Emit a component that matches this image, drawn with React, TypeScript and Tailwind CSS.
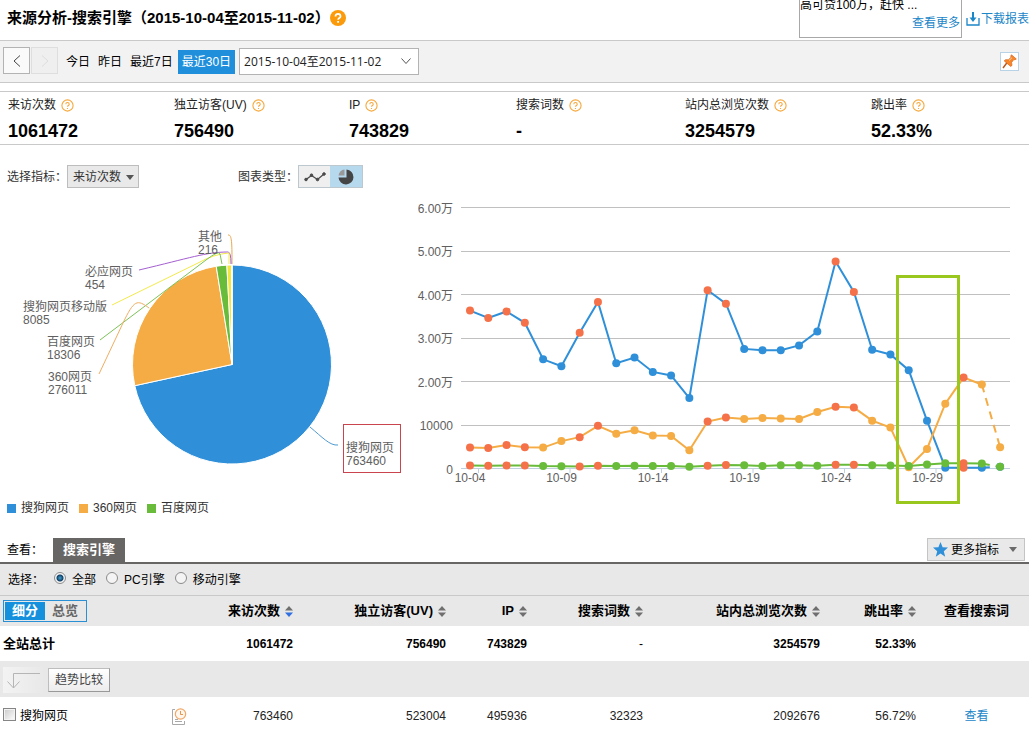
import React from "react";

const stats = [
  { label: "来访次数", value: "1061472" },
  { label: "独立访客(UV)", value: "756490" },
  { label: "IP", value: "743829" },
  { label: "搜索词数", value: "-" },
  { label: "站内总浏览次数", value: "3254579" },
  { label: "跳出率", value: "52.33%" },
];

const columns = ["来访次数", "独立访客(UV)", "IP", "搜索词数", "站内总浏览次数", "跳出率"];

const BLUE = "#2f90d9";
const ORANGE = "#f5ac44";
const GREEN = "#68bc3a";
const RED = "#f57149";

const series = [
  {
    name: "搜狗网页",
    color: BLUE,
    values: [
      36300, 34600, 36100, 33500, 25100, 23500, 31200, 38300, 24200, 25500,
      22200, 21400, 16200, 41000, 37900, 27500, 27200, 27200, 28300, 31500,
      47600, 40600, 27300, 26200, 22600, 11000, 200, 200, 200, 400,
    ],
  },
  {
    name: "360网页",
    color: ORANGE,
    values: [
      4800, 4700, 5400, 4900, 4800, 6300, 7200, 9800, 8000, 8800, 7600, 7500,
      4200, 10800, 11700, 11400, 11600, 11500, 11400, 13000, 14200, 14000,
      11000, 9400, 300, 4500, 14900, 20900, 19300, 4900,
    ],
  },
  {
    name: "百度网页",
    color: GREEN,
    values: [
      700, 650, 700, 700, 550, 500, 450, 650, 600, 650, 600, 550, 400, 650, 800,
      750, 550, 750, 750, 650, 850, 850, 750, 700, 600, 900, 1200, 1200, 1150,
      400,
    ],
  },
];

// days drawn with a red marker
const holidays = [0, 1, 2, 3, 6, 7, 13, 14, 20, 21, 27];

const yLabels = ["0", "10000", "2.00万", "3.00万", "4.00万", "5.00万", "6.00万"];
const xLabels = ["10-04", "10-09", "10-14", "10-19", "10-24", "10-29"];

const pieSlices = [
  { value: 763460, color: BLUE },
  { value: 276011, color: ORANGE },
  { value: 18306, color: GREEN },
  { value: 8085, color: "#f2e63d" },
  { value: 454, color: "#9b59c9" },
  { value: 216, color: "#d98a3a" },
];

const pieLabels = [
  { name: "其他", value: "216", x: 198, y: 53 },
  { name: "必应网页", value: "454", x: 85, y: 88 },
  { name: "搜狗网页移动版", value: "8085", x: 23, y: 123 },
  { name: "百度网页", value: "18306", x: 47, y: 158 },
  { name: "360网页", value: "276011", x: 48, y: 193 },
  { name: "搜狗网页", value: "763460", x: 346, y: 264 },
];

const pieLines = [
  { d: "M228 47 C232 46 232 56 232 76", color: "#e6a94e" },
  { d: "M139 82 C190 70 206 64 228 64 Q231 64 231 76", color: "#a55fd0" },
  { d: "M112 117 L198 75 Q214 66 229 65 L229 76", color: "#f3ea4c" },
  { d: "M100 152 L206 72 Q219 62 220 66 L222 76", color: "#7cc257" },
  { d: "M99 186 L123 135 C134 112 137 111 149 120", color: "#efae62" },
  { d: "M310 239 C322 249 330 258 338 257", color: "#4f9bd0" },
];

function HelpIcon() {
  return (
    <svg width="13" height="13" viewBox="0 0 13 13" fill="none">
      <circle cx="6.5" cy="6.5" r="5.6" stroke="#f6a83c" strokeWidth="1.1" />
      <path
        d="M4.8 5.2c0-2.2 3.4-2.2 3.4 0 0 1.3-1.7 1.2-1.7 2.5M6.5 9v1"
        stroke="#f6a83c"
        strokeWidth="1.1"
      />
    </svg>
  );
}

function SortIcon({ active }: { active?: boolean }) {
  return (
    <svg width="8" height="11" viewBox="0 0 8 11">
      <path d="M4 0L8 4.5H0z" fill="#6f6f6f" />
      <path d="M4 11L0 6.5H8z" fill={active ? "#2f6fe0" : "#6f6f6f"} />
    </svg>
  );
}

function PieChart() {
  const cx = 232;
  const cy = 176.5;
  const r = 99.5;
  const total = pieSlices.reduce((sum, s) => sum + s.value, 0);
  let start = 0;

  return (
    <svg viewBox="0 0 410 302" className="block w-full">
      {pieSlices.map((s) => {
        const end = start + (s.value / total) * Math.PI * 2;
        const large = end - start > Math.PI ? 1 : 0;
        const d = `M${cx} ${cy} L${cx + r * Math.sin(start)} ${cy - r * Math.cos(start)} A${r} ${r} 0 ${large} 1 ${cx + r * Math.sin(end)} ${cy - r * Math.cos(end)}Z`;
        start = end;
        return <path key={s.value} d={d} fill={s.color} stroke="#fff" />;
      })}
      {pieLines.map((l) => (
        <path key={l.d} d={l.d} fill="none" stroke={l.color} />
      ))}
      {pieLabels.map((l) => (
        <text key={l.value} fontSize="12" fill="#606060" x={l.x} y={l.y}>
          {l.name}
          <tspan x={l.x} dy="13">
            {l.value}
          </tspan>
        </text>
      ))}
      <rect x="343.5" y="236.5" width="57" height="48" fill="none" stroke="#c9444f" />
    </svg>
  );
}

function LineChart() {
  const px = (i: number) => 60 + i * 18.28;
  const py = (v: number) => 273.5 - (v / 10000) * 43.5;

  return (
    <svg viewBox="0 0 619 315" className="block w-full">
      {yLabels.map((label, i) => (
        <g key={label}>
          <line
            x1="51"
            x2="600"
            y1={Math.floor(py(i * 10000)) + 0.5}
            y2={Math.floor(py(i * 10000)) + 0.5}
            stroke={i === 0 ? "#c0d0e0" : "#c0c0c0"}
          />
          <text x="43" y={py(i * 10000) + 5} textAnchor="end" fontSize="12" fill="#606060">
            {label}
          </text>
        </g>
      ))}
      {xLabels.map((label, i) => (
        <g key={label}>
          <line x1={68.5 + i * 91.5} x2={68.5 + i * 91.5} y1="273" y2="278" stroke="#c0d0e0" />
          <text x={60 + i * 91.5} y="287" textAnchor="middle" fontSize="12" fill="#606060">
            {label}
          </text>
        </g>
      ))}
      {series.map((s) => {
        const points = s.values.map((v, i) => `${px(i)},${py(v)}`);
        return (
          <g key={s.name}>
            <polyline points={points.slice(0, 29).join(" ")} fill="none" stroke={s.color} strokeWidth="2" />
            {/* today is not complete yet */}
            <polyline
              points={points.slice(28).join(" ")}
              fill="none"
              stroke={s.color}
              strokeWidth="2"
              strokeDasharray="8 6"
            />
            {s.values.map((v, i) => (
              <circle key={i} cx={px(i)} cy={py(v)} r="4" fill={holidays.includes(i) ? RED : s.color} />
            ))}
          </g>
        );
      })}
      <rect x="487.5" y="81.5" width="61" height="226" fill="none" stroke="#99c71e" strokeWidth="3" />
    </svg>
  );
}

function Header() {
  return (
    <header className="flex h-10 items-start pl-[7px]">
      <h1 className="flex items-center pt-2 text-[15px] leading-5 font-bold whitespace-nowrap">
        来源分析-搜索引擎（2015-10-04至2015-11-02）
        <svg width="16" height="16" viewBox="0 0 16 16" fill="none">
          <circle cx="8" cy="8" r="8" fill="#fb9a0a" />
          <path d="M5.5 6.4c0-3.3 5-3.3 5 0 0 1.8-2.4 1.6-2.4 3.4M8.1 11v1.8" stroke="#fff" strokeWidth="1.8" />
        </svg>
      </h1>
      {/* Notice */}
      <div className="ml-auto flex h-[38px] w-[163px] shrink-0 flex-col justify-end gap-[2px] overflow-hidden border-x border-b border-[#a8a8a8] pb-[6px]">
        <p className="whitespace-nowrap">高可贷100万，赶快 ...</p>
        <a href="#more" className="self-end pr-px text-[#1b86c8]">
          查看更多
        </a>
      </div>
      <a href="#download" className="ml-1 flex shrink-0 items-center gap-px pt-[11px] text-[#1b86c8]">
        <svg width="14" height="14" viewBox="0 0 14 14" fill="none" stroke="#1b86c8">
          <path d="M1 6v7h12V6" strokeWidth="1.3" />
          <path d="M7 0v6" strokeWidth="2" />
          <path d="M3.5 5.5h7L7 10z" fill="#1b86c8" stroke="none" />
        </svg>
        下载报表
      </a>
    </header>
  );
}

function Toolbar() {
  return (
    <div className="flex h-[43px] items-center border-y border-[#c9c9c9] bg-[#f2f2f2] pr-[10px] pl-[3px]">
      <div className="flex gap-px pb-[2px]">
        <button aria-label="上一页" className="flex h-[27px] w-[27px] items-center justify-center border border-[#b3b3b3] bg-[#fafafa]">
          <svg width="8" height="12" viewBox="0 0 8 12" fill="none" stroke="#444">
            <path d="M7 0.5L1 6l6 5.5" />
          </svg>
        </button>
        <button aria-label="下一页" disabled className="flex h-[27px] w-[27px] items-center justify-center border border-[#dedede] bg-[#efefef]">
          <svg width="8" height="12" viewBox="0 0 8 12" fill="none" stroke="#ddd">
            <path d="M1 0.5L7 6l-6 5.5" />
          </svg>
        </button>
      </div>
      <div className="ml-2 flex items-center gap-2">
        <button>今日</button>
        <button>昨日</button>
        <button>最近7日</button>
        <button className="-ml-[3px] h-6 bg-[#1f8fdc] px-1 text-white">最近30日</button>
      </div>
      <div className="relative ml-1">
        <select
          aria-label="日期范围"
          className="block h-[27px] w-[180px] appearance-none border border-[#b3b3b3] bg-white pl-1 font-['Open_Sans','Noto_Sans_CJK_SC',sans-serif] text-[#222]"
        >
          <option>2015-10-04至2015-11-02</option>
        </select>
        <svg className="pointer-events-none absolute top-[10px] right-2" width="10" height="7" viewBox="0 0 10 7" fill="none" stroke="#555">
          <path d="M0.5 0.5L5 5.5l4.5-5" />
        </svg>
      </div>
      <button aria-label="固定" className="ml-auto flex h-[19px] w-[19px] items-center justify-center border border-[#b9d3e6] bg-white">
        <svg width="15" height="15" viewBox="0 0 15 15">
          <path d="M1 14l4.5-6" stroke="#b5561b" strokeWidth="1.4" />
          <path
            d="M9.5 0.8l4.8 4.2-1.4 0.8-1-0.3-2.3 2.9 0.4 3-1.3 1L2.2 6.9l1.2-1.2 3 0.1 2.7-2.6-0.4-1.2z"
            fill="#f8872c"
            stroke="#d8641a"
            strokeWidth="0.7"
          />
          <path d="M7 6.6l2.9-2.8" stroke="#ffd09b" />
        </svg>
      </button>
    </div>
  );
}

function Charts() {
  return (
    <section className="flex items-start pb-[22px]">
      <div className="w-[410px] shrink-0 pt-5 text-[#333]">
        <div className="flex pl-[7px]">
          <div className="flex w-[231px] items-center">
            <label htmlFor="metric">选择指标：</label>
            <div className="relative">
              <select
                id="metric"
                className="block h-[23px] w-[72px] appearance-none border border-[#bdbdbd] bg-[#e9e9e9] pl-[5px]"
              >
                <option>来访次数</option>
              </select>
              <svg className="pointer-events-none absolute top-[10px] right-[5px]" width="8" height="5" viewBox="0 0 8 5">
                <path d="M0 0h8L4 5z" fill="#555" />
              </svg>
            </div>
          </div>
          <span className="flex items-center">图表类型：</span>
          <div className="flex h-[23px] border border-[#bcc7ce]">
            <button aria-label="折线图" className="flex w-[31px] items-center justify-center bg-[#efefef]">
              <svg width="22" height="10" viewBox="0 0 22 10" fill="#4a4a4a" stroke="#4a4a4a">
                <path d="M2 7.5l5.5-4 6 4L20 2" fill="none" strokeWidth="1.3" />
                <circle cx="2" cy="7.5" r="1.3" />
                <circle cx="7.5" cy="3.2" r="1.3" />
                <circle cx="13.5" cy="7.5" r="1.3" />
                <circle cx="20" cy="2" r="1.3" />
              </svg>
            </button>
            <button aria-label="饼图" className="flex w-8 items-center justify-center bg-[#b6d9ee]">
              <svg width="16" height="16" viewBox="0 0 16 16">
                <path d="M8.5 0.5a7.5 7.5 0 1 1-8 8h8z" fill="#454545" />
                <path d="M6.5 0.5v6h-6a6.5 6.5 0 0 1 6-6z" fill="#999" />
              </svg>
            </button>
          </div>
        </div>
        <PieChart />
        <ul className="mt-[10px] flex gap-[10px] pl-[7px]">
          {series.map((s) => (
            <li key={s.name} className="flex items-center gap-[5px]">
              <span className="h-[9px] w-[9px]" style={{ backgroundColor: s.color }} />
              {s.name}
            </li>
          ))}
        </ul>
      </div>
      <div className="min-w-0 flex-1 pt-[50px]">
        <LineChart />
      </div>
    </section>
  );
}

function Filters() {
  return (
    <>
      <div className="flex h-[26px] items-start border-b-2 border-[#686565] pr-1 pl-[7px]">
        <span className="w-[46px] pt-1">查看：</span>
        <button className="h-6 bg-[#686565] px-[10px] text-[13px] font-bold text-white">搜索引擎</button>
        <button className="ml-auto flex h-[23px] items-center border border-[#c4c4c4] bg-[#e9e9e9] pr-[7px] pl-[5px]">
          <svg width="15" height="15" viewBox="0 0 15 15" className="mr-[3px]">
            <path d="M7.5 0l2.1 5.3 5.4 0.3-4.2 3.6 1.4 5.5-4.7-3.1-4.7 3.1 1.4-5.5L0 5.6l5.4-0.3z" fill="#2f90d9" />
          </svg>
          更多指标
          <svg width="8" height="5" viewBox="0 0 8 5" className="ml-[10px]">
            <path d="M0 0h8L4 5z" fill="#6a6a6a" />
          </svg>
        </button>
      </div>
      <fieldset className="flex h-8 items-center gap-[10px] border-b border-[#c9c9c9] bg-[#e8e8e8] pl-2">
        <span className="w-9">选择：</span>
        {["全部", "PC引擎", "移动引擎"].map((name, i) => (
          <label key={name} className="flex items-center gap-[6px]">
            <input
              type="radio"
              name="engine"
              defaultChecked={i === 0}
              className="mb-[3px] h-3 w-3 appearance-none rounded-full border border-[#8b8b8b] bg-[#f4f4f4] checked:bg-[radial-gradient(circle,#3fa3d2_0,#123f66_3px,#f4f4f4_4px)]"
            />
            {name}
          </label>
        ))}
      </fieldset>
    </>
  );
}

function DataTable() {
  return (
    <table className="w-full table-fixed text-right">
      <colgroup>
        <col className="w-[200px]" />
        <col className="w-[93px]" />
        <col className="w-[153px]" />
        <col className="w-[81px]" />
        <col className="w-[116px]" />
        <col className="w-[177px]" />
        <col className="w-[96px]" />
        <col className="w-[113px]" />
      </colgroup>
      <thead>
        <tr className="h-[30px] bg-[#e8e8e8] text-[13px]">
          <th className="p-0 pl-[3px]">
            <div className="flex h-[22px] w-[84px] border border-[#2a90d6] p-px">
              <button className="w-10 bg-[#1590dd] font-bold text-white">细分</button>
              <button className="w-10 font-bold text-[#666]">总览</button>
            </div>
          </th>
          {columns.map((name, i) => (
            <th key={name} className="p-0">
              <button className="inline-flex items-center gap-[5px] whitespace-nowrap">
                {name}
                <SortIcon active={i === 0} />
              </button>
            </th>
          ))}
          <th className="p-0 pl-2 text-center whitespace-nowrap">查看搜索词</th>
        </tr>
      </thead>
      <tbody>
        <tr className="h-[35px] font-bold">
          <td className="p-0 pl-[3px] text-left text-[13px]">全站总计</td>
          <td>1061472</td>
          <td>756490</td>
          <td>743829</td>
          <td className="font-normal">-</td>
          <td>3254579</td>
          <td>52.33%</td>
          <td />
        </tr>
        <tr className="h-9 bg-[#e8e8e8]">
          <td colSpan={8} className="p-0 pl-[3px]">
            <div className="flex items-center gap-[3px] pt-[2px]">
              <span className="flex h-[26px] w-[42px] items-center justify-center bg-gradient-to-r from-[#f3f3f3] to-[#e8e8e8]">
                <svg width="34" height="17" viewBox="0 0 34 17" fill="none" stroke="#b5b5b5">
                  <path d="M33 1.5H6.5V16M0.5 9.5l6 6.500 6-6.500" />
                </svg>
              </span>
              <button className="h-6 border border-[#bdbdbd] border-r-[#999] border-b-[#999] bg-gradient-to-b from-white to-[#ececec] px-[6px] text-[#444]">
                趋势比较
              </button>
            </div>
          </td>
        </tr>
        <tr className="h-8 text-[#222]">
          <td className="p-0 pt-[6px] pl-[3px]">
            <div className="flex items-center pr-[13px]">
              <label className="flex items-center gap-1 text-black">
                <input
                  type="checkbox"
                  className="mb-1 h-[13px] w-[13px] appearance-none border border-[#858585] bg-gradient-to-br from-[#c9c9c9] to-white shadow-[inset_0_0_0_1px_#f3f3f3] checked:bg-[#2f90d9]"
                />
                搜狗网页
              </label>
              <svg width="15" height="17" viewBox="0 0 15 17" fill="none" className="ml-auto">
                <path d="M3 1.5H0.5V16.5H12.5V13M3 11.5h3M3 13.5h7" stroke="#a8a8a8" />
                <circle cx="8.5" cy="6" r="5.2" fill="#fff7ee" stroke="#f0a868" strokeWidth="1.2" />
                <path d="M8.5 3v3.5H11" stroke="#e8954c" />
              </svg>
            </div>
          </td>
          <td className="p-0 pt-[6px]">763460</td>
          <td className="p-0 pt-[6px]">523004</td>
          <td className="p-0 pt-[6px]">495936</td>
          <td className="p-0 pt-[6px]">32323</td>
          <td className="p-0 pt-[6px]">2092676</td>
          <td className="p-0 pt-[6px]">56.72%</td>
          <td className="p-0 pt-[6px] pl-2 text-center">
            <a href="#keywords" className="text-[#1b86c8]">
              查看
            </a>
          </td>
        </tr>
      </tbody>
    </table>
  );
}

export default function App() {
  return (
    <main className="overflow-x-hidden bg-white font-['Liberation_Sans','Noto_Sans_CJK_SC',sans-serif] text-[12px] leading-4 text-black">
      <Header />
      <Toolbar />
      {/* Summary */}
      <dl className="mt-2 grid h-[54px] grid-cols-[166fr_175fr_167fr_169fr_186fr_158fr] border-y border-[#c9c9c9] pt-[5px] pl-2">
        {stats.map((s) => (
          <div key={s.label}>
            <dt className="flex items-center gap-[5px] whitespace-nowrap text-[#222]">
              {s.label}
              <HelpIcon />
            </dt>
            <dd className="mt-2 text-lg leading-5 font-bold">{s.value}</dd>
          </div>
        ))}
      </dl>
      <Charts />
      <Filters />
      <DataTable />
    </main>
  );
}
